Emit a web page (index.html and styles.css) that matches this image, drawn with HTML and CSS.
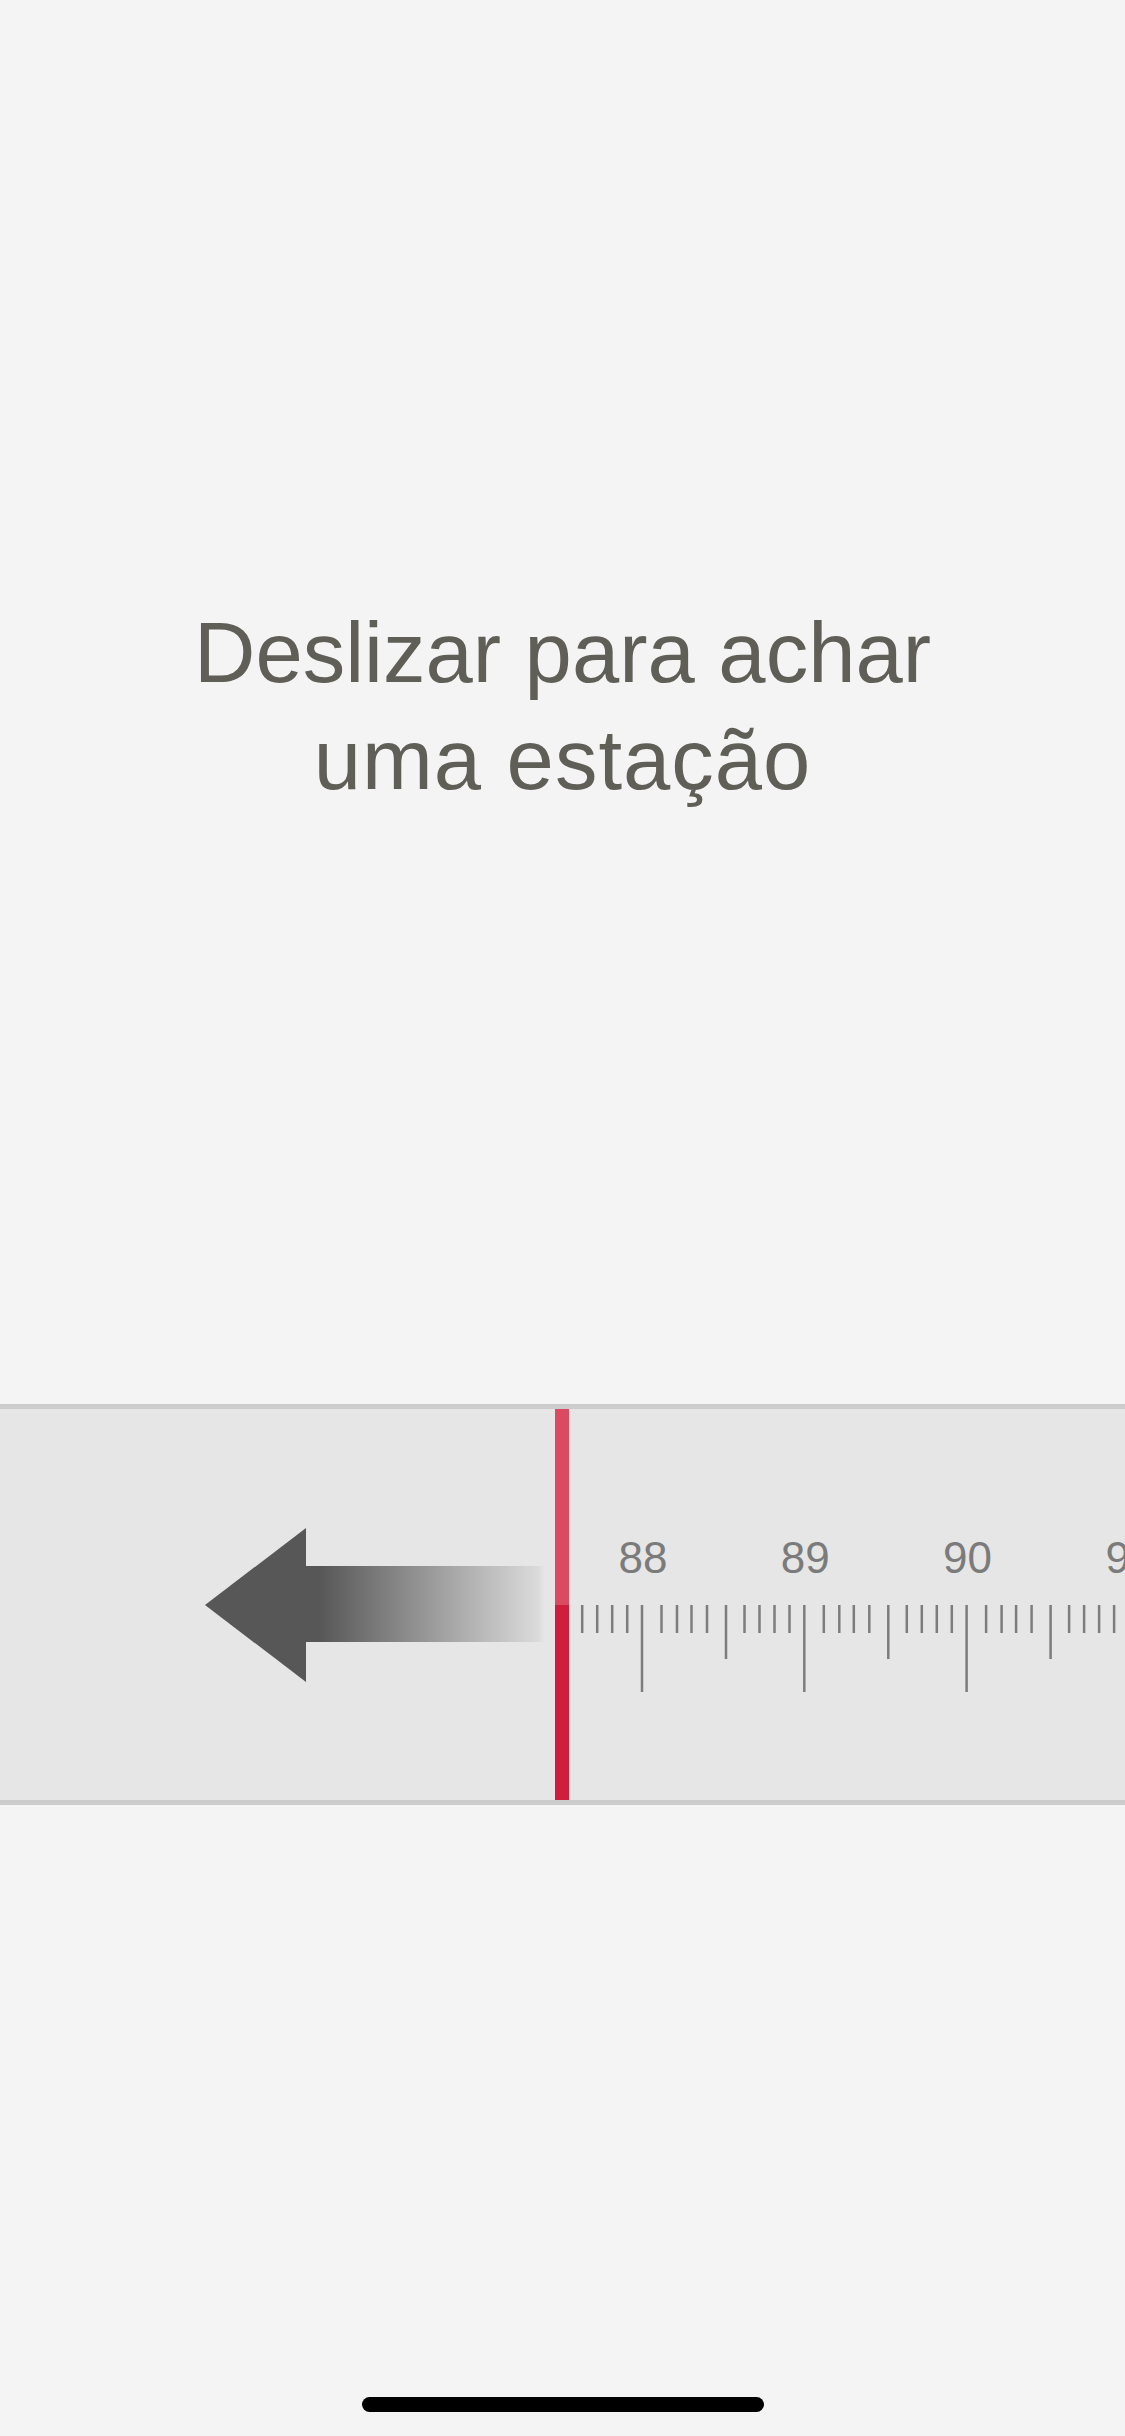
FILE: index.html
```html
<!DOCTYPE html>
<html>
<head>
<title>Sintonizar</title>
<link rel="stylesheet" href="styles.css">
</head>
<body>

<div id="screen">
    <h1 id="prompt">Deslizar para achar<br><span class="second">uma estação</span></h1>

    <div id="tuner">
        <div class="hint">
            <svg class="arrow" width="340" height="154" viewBox="0 0 340 154">
                <defs>
                    <linearGradient id="shaftFade" x1="0" y1="0" x2="1" y2="0">
                        <stop offset="0" stop-color="#575757" stop-opacity="1"/>
                        <stop offset="0.06" stop-color="#575757" stop-opacity="1"/>
                        <stop offset="0.97" stop-color="#575757" stop-opacity="0.08"/>
                        <stop offset="1" stop-color="#575757" stop-opacity="0"/>
                    </linearGradient>
                </defs>
                <rect x="100" y="38" width="240" height="76" fill="url(#shaftFade)"/>
                <polygon points="0,77 101,0 101,154" fill="#575757"/>
            </svg>
        </div>

        <div class="needle">
            <div class="needle-top"></div>
            <div class="needle-bottom"></div>
        </div>

        <div class="scale">
            <svg width="556" height="391" viewBox="0 0 556 391">
                <defs>
                    <!-- one MHz of dial: major, 4 small, half, 4 small -->
                    <g id="mhz" class="tick">
                        <rect x="-1.25" y="196" width="2.5" height="87"/>
                        <rect x="18.25" y="196" width="2.5" height="28"/>
                        <rect x="33.75" y="196" width="2.5" height="28"/>
                        <rect x="48.25" y="196" width="2.5" height="28"/>
                        <rect x="63.75" y="196" width="2.5" height="28"/>
                        <rect x="82.75" y="196" width="2.5" height="54"/>
                        <rect x="101.25" y="196" width="2.5" height="28"/>
                        <rect x="116.25" y="196" width="2.5" height="28"/>
                        <rect x="131.25" y="196" width="2.5" height="28"/>
                        <rect x="146.25" y="196" width="2.5" height="28"/>
                    </g>
                </defs>
                <use href="#mhz" x="-89.3"/>
                <use href="#mhz" x="73"/>
                <use href="#mhz" x="235.3"/>
                <use href="#mhz" x="397.6"/>
                <use href="#mhz" x="559.9"/>

                <text class="freq" x="74" y="164">88</text>
                <text class="freq" x="236.3" y="164">89</text>
                <text class="freq" x="398.6" y="164">90</text>
                <text class="freq" x="560.9" y="164">91</text>
            </svg>
        </div>
    </div>

    <div id="homeBar"></div>
</div>

</body>
</html>
```

FILE: styles.css
```css
html, body {
    margin: 0;
    padding: 0;
    background: #f4f4f4;
}

body {
    font-family: 'Liberation Sans', Arial, sans-serif;
}

#screen {
    width: 1125px;
    height: 2436px;
    display: flex;
    flex-direction: column;
    overflow: hidden;
}

#prompt {
    margin: 599px 0 0;
    font-size: 85px;
    line-height: 107px;
    font-weight: normal;
    text-align: center;
    color: #5f5e57;
}

#prompt .second {
    letter-spacing: 1px;
}

#tuner {
    margin-top: 591px;
    height: 391px;
    display: flex;
    background: #e6e6e6;
    border-top: 5px solid #cccccc;
    border-bottom: 5px solid #cccccc;
}

.hint {
    width: 555px;
    padding-left: 205px;
    box-sizing: border-box;
    display: flex;
    align-items: center;
}

.arrow {
    display: block;
}

.needle {
    width: 14px;
    display: flex;
    flex-direction: column;
}

.needle-top {
    height: 196px;
    background: #da4b62;
}

.needle-bottom {
    flex: 1;
    background: #cf1e3c;
}

.scale {
    flex: 1;
    overflow: hidden;
}

.scale svg {
    display: block;
}

.tick {
    fill: #7d7d7d;
}

.freq {
    font-family: 'Liberation Sans', Arial, sans-serif;
    font-size: 44px;
    fill: #7b7b7b;
    text-anchor: middle;
}

#homeBar {
    margin: auto auto 24px;
    width: 402px;
    height: 15px;
    border-radius: 8px;
    background: #000;
}
```
